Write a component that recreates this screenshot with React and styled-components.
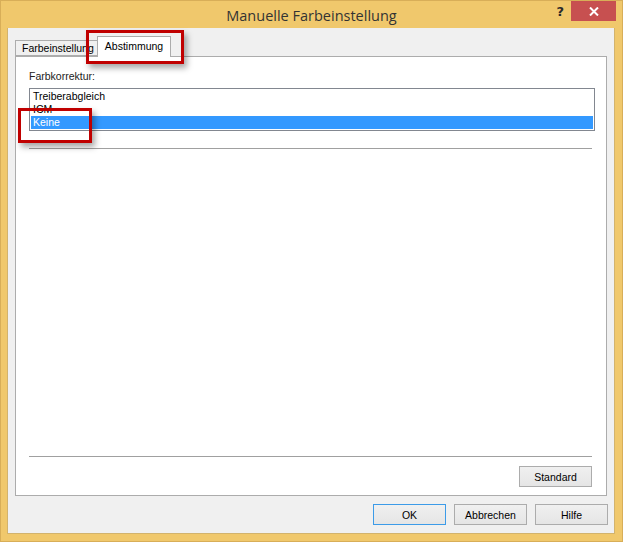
import React from "react"
import styled, { createGlobalStyle } from "styled-components"

const GlobalStyle = createGlobalStyle`
  html, body {
    margin: 0;
    padding: 0;
    background: #ffffff;
  }
  body {
    font-family: "Liberation Sans", Arial, sans-serif;
    font-size: 10.5px;
    color: #000;
  }
`

const items = ["Treiberabgleich", "ICM", "Keine"]

export default function App() {
  return (
    <>
      <GlobalStyle />
      <Window>
        <TitleBar>
          <Title>Manuelle Farbeinstellung</Title>
          <HelpButton>?</HelpButton>
          <CloseButton>
            <svg width="10" height="9" viewBox="0 0 10 9">
              <path d="M1 0.5 L9 8.5 M9 0.5 L1 8.5" stroke="#fff" strokeWidth="2" />
            </svg>
          </CloseButton>
        </TitleBar>
        <Client>
          <TabRow>
            <Tab>Farbeinstellung</Tab>
            <Tab active>Abstimmung</Tab>
          </TabRow>
          <Panel>
            <Label>Farbkorrektur:</Label>
            <ListBox>
              {items.map((item) => (
                <ListItem key={item} selected={item === "Keine"}>
                  {item}
                </ListItem>
              ))}
            </ListBox>
            <Separator />
            <Spacer />
            <Separator />
            <PanelFooter>
              <Button>Standard</Button>
            </PanelFooter>
          </Panel>
          <ButtonRow>
            <Button primary>OK</Button>
            <Button>Abbrechen</Button>
            <Button>Hilfe</Button>
          </ButtonRow>
        </Client>
        <Highlight style={{ left: 85, top: 29, width: 98, height: 34 }} />
        <Highlight style={{ left: 17, top: 107, width: 74, height: 35 }} />
      </Window>
    </>
  )
}

const Window = styled.div`
  position: relative;
  width: 623px;
  height: 542px;
  box-sizing: border-box;
  background: #f0c86c;
  border: 1px solid #d8ae58;
  display: flex;
  flex-direction: column;
`

const TitleBar = styled.div`
  height: 29px;
  position: relative;
  display: flex;
  align-items: center;
  justify-content: center;
`

const Title = styled.div`
  font-family: "Open Sans", "Liberation Sans", sans-serif;
  font-size: 14.5px;
  color: #333;
  margin-top: 2px;
`

const HelpButton = styled.div`
  position: absolute;
  right: 58px;
  top: 3px;
  font-family: "DejaVu Sans", sans-serif;
  font-weight: bold;
  font-size: 13px;
  color: #2a2a2a;
`

const CloseButton = styled.div`
  position: absolute;
  right: 6px;
  top: 0;
  width: 45px;
  height: 20px;
  background: #c75050;
  display: flex;
  align-items: center;
  justify-content: center;
`

const Client = styled.div`
  flex: 1;
  margin: 0 7px 7px 6px;
  background: #f0f0f0;
  border: 1px solid #d2b36d;
  border-top: none;
  display: flex;
  flex-direction: column;
  padding: 0 0 8px 0;
`

const TabRow = styled.div`
  height: 28px;
  display: flex;
  align-items: flex-end;
  padding-left: 7px;
`

const Tab = styled.div`
  position: relative;
  box-sizing: border-box;
  height: ${(p) => (p.active ? "21px" : "16px")};
  padding: ${(p) => (p.active ? "3px 7px 0 7px" : "1px 3px 0 6px")};
  margin-bottom: ${(p) => (p.active ? "-1px" : "0")};
  margin-left: ${(p) => (p.active ? "-1px" : "0")};
  background: ${(p) => (p.active ? "#fff" : "#f0f0f0")};
  border: 1px solid #acacac;
  border-bottom: ${(p) => (p.active ? "none" : "1px solid #acacac")};
  z-index: ${(p) => (p.active ? 2 : 1)};
  font-size: 10.5px;
  white-space: nowrap;
`

const Panel = styled.div`
  position: relative;
  z-index: 1;
  margin: 0 7px 0 7px;
  height: 440px;
  box-sizing: border-box;
  background: #fff;
  border: 1px solid #acacac;
  padding: 13px 14px 8px 13px;
  display: flex;
  flex-direction: column;
`

const Label = styled.div`
  font-size: 10.5px;
  line-height: 13px;
  color: #222;
`

const ListBox = styled.div`
  margin-top: 5px;
  margin-right: -3px;
  border: 1px solid #828790;
  padding: 1px;
  display: flex;
  flex-direction: column;
`

const ListItem = styled.div`
  height: 13px;
  line-height: 13px;
  padding-left: 2px;
  font-size: 10.5px;
  background: ${(p) => (p.selected ? "#3399ff" : "transparent")};
  color: ${(p) => (p.selected ? "#fff" : "#000")};
`

const Separator = styled.div`
  height: 1px;
  background: #a0a0a0;
  margin-top: 17px;
`

const Spacer = styled.div`
  flex: 1;
`

const PanelFooter = styled.div`
  display: flex;
  justify-content: flex-end;
  margin-top: 9px;
`

const ButtonRow = styled.div`
  display: flex;
  justify-content: flex-end;
  gap: 8px;
  padding: 8px 6px 0 0;
`

const Button = styled.div`
  width: 73px;
  height: 21px;
  box-sizing: border-box;
  border: 1px solid ${(p) => (p.primary ? "#3c9be8" : "#acacac")};
  background: linear-gradient(#f0f0f0, #e5e5e5);
  display: flex;
  align-items: center;
  justify-content: center;
  font-size: 10.5px;
  color: #000;
`

const Highlight = styled.div`
  position: absolute;
  box-sizing: border-box;
  border: 3px solid #c00000;
  box-shadow: 3px 4px 6px rgba(0, 0, 0, 0.35);
  z-index: 5;
  pointer-events: none;
`
